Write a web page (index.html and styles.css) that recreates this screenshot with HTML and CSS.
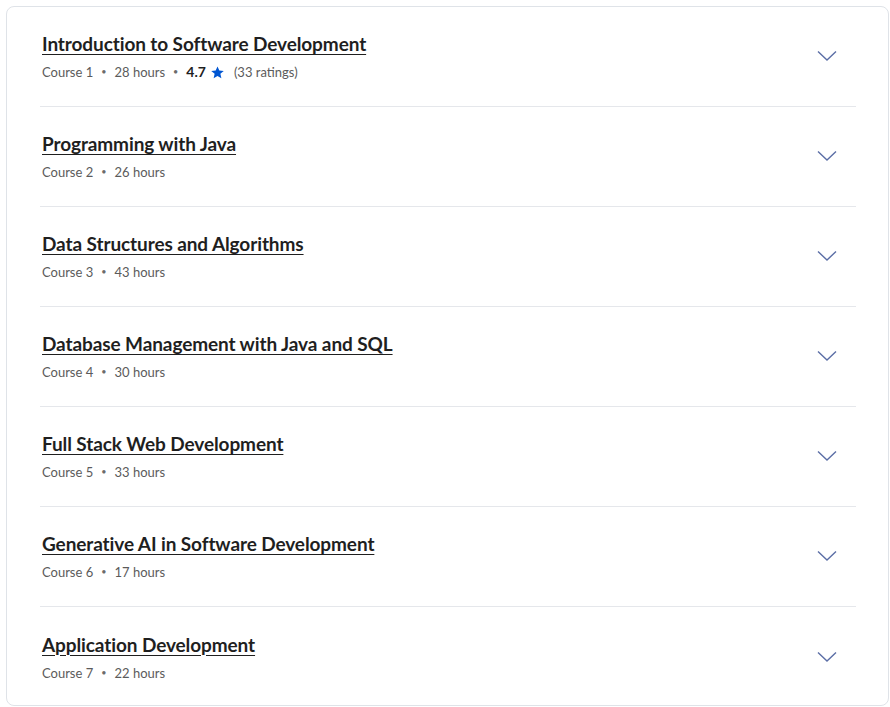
FILE: index.html
```html
<!DOCTYPE html>
<html lang="en">
<head>
<meta charset="utf-8">
<title>Courses</title>
<link rel="stylesheet" href="styles.css">
</head>
<body>
<div class="card">
  <ul class="courses">
    <li class="course">
      <div class="info">
        <a class="title" href="#">Introduction to Software Development</a>
        <div class="meta">
          <span>Course 1</span><span class="dot">•</span><span>28 hours</span><span class="dot">•</span>
          <span class="rating">4.7</span>
          <svg class="star" viewBox="0 0 24 24" width="15" height="15"><path d="M12 2.2l2.9 6.6 7.1.6-5.4 4.7 1.6 7-6.2-3.7-6.2 3.7 1.6-7L2 9.4l7.1-.6z" fill="#0056d2"/></svg>
          <span class="count">(33 ratings)</span>
        </div>
      </div>
      <button class="toggle" aria-label="Expand"><svg viewBox="0 0 20 12" width="20" height="12"><path d="M1 1.5l9 8.5 9-8.5" fill="none" stroke="#5b6ea6" stroke-width="1.4"/></svg></button>
    </li>
    <li class="course">
      <div class="info">
        <a class="title" href="#">Programming with Java</a>
        <div class="meta"><span>Course 2</span><span class="dot">•</span><span>26 hours</span></div>
      </div>
      <button class="toggle" aria-label="Expand"><svg viewBox="0 0 20 12" width="20" height="12"><path d="M1 1.5l9 8.5 9-8.5" fill="none" stroke="#5b6ea6" stroke-width="1.4"/></svg></button>
    </li>
    <li class="course">
      <div class="info">
        <a class="title" href="#">Data Structures and Algorithms</a>
        <div class="meta"><span>Course 3</span><span class="dot">•</span><span>43 hours</span></div>
      </div>
      <button class="toggle" aria-label="Expand"><svg viewBox="0 0 20 12" width="20" height="12"><path d="M1 1.5l9 8.5 9-8.5" fill="none" stroke="#5b6ea6" stroke-width="1.4"/></svg></button>
    </li>
    <li class="course">
      <div class="info">
        <a class="title" href="#">Database Management with Java and SQL</a>
        <div class="meta"><span>Course 4</span><span class="dot">•</span><span>30 hours</span></div>
      </div>
      <button class="toggle" aria-label="Expand"><svg viewBox="0 0 20 12" width="20" height="12"><path d="M1 1.5l9 8.5 9-8.5" fill="none" stroke="#5b6ea6" stroke-width="1.4"/></svg></button>
    </li>
    <li class="course">
      <div class="info">
        <a class="title" href="#">Full Stack Web Development</a>
        <div class="meta"><span>Course 5</span><span class="dot">•</span><span>33 hours</span></div>
      </div>
      <button class="toggle" aria-label="Expand"><svg viewBox="0 0 20 12" width="20" height="12"><path d="M1 1.5l9 8.5 9-8.5" fill="none" stroke="#5b6ea6" stroke-width="1.4"/></svg></button>
    </li>
    <li class="course">
      <div class="info">
        <a class="title" href="#">Generative AI in Software Development</a>
        <div class="meta"><span>Course 6</span><span class="dot">•</span><span>17 hours</span></div>
      </div>
      <button class="toggle" aria-label="Expand"><svg viewBox="0 0 20 12" width="20" height="12"><path d="M1 1.5l9 8.5 9-8.5" fill="none" stroke="#5b6ea6" stroke-width="1.4"/></svg></button>
    </li>
    <li class="course">
      <div class="info">
        <a class="title" href="#">Application Development</a>
        <div class="meta"><span>Course 7</span><span class="dot">•</span><span>22 hours</span></div>
      </div>
      <button class="toggle" aria-label="Expand"><svg viewBox="0 0 20 12" width="20" height="12"><path d="M1 1.5l9 8.5 9-8.5" fill="none" stroke="#5b6ea6" stroke-width="1.4"/></svg></button>
    </li>
  </ul>
</div>
</body>
</html>
```
FILE: styles.css
```css
html, body {
  margin: 0;
  padding: 0;
  background: #ffffff;
}

body {
  padding: 6px 1px 0 6px;
  font-family: "Lato", "Noto Sans", sans-serif;
  color: #1f1f1f;
}

.card {
  border: 1px solid #dfe3e8;
  border-radius: 8px;
  height: 700px;
  box-sizing: border-box;
  padding: 0 32px 0 33px;
}

.courses {
  list-style: none;
  margin: 0;
  padding: 0;
}

/* one course per row, chevron on the right */
.course {
  display: flex;
  align-items: center;
  justify-content: space-between;
  height: 100px;
  box-sizing: border-box;
  padding: 25px 0 24px 2px;
  border-bottom: 1px solid #e5e7eb;
}

.course:last-child {
  border-bottom: none;
}

.info {
  display: flex;
  flex-direction: column;
  gap: 6px;
}

.title {
  font-size: 19px;
  line-height: 24px;
  font-weight: 700;
  color: #1f1f1f;
  text-decoration: underline;
  text-underline-offset: 3px;
  text-decoration-thickness: 1px;
  letter-spacing: -0.1px;
}

.meta {
  display: flex;
  align-items: center;
  font-size: 13px;
  line-height: 20px;
  color: #5b5b5b;
}

.dot {
  font-size: 9px;
  margin: 0 8px;
  color: #6b6b6b;
}

.rating {
  font-weight: 700;
  font-size: 14px;
  color: #1f1f1f;
  margin-right: 4px;
}

.star {
  margin-right: 9px;
}

.count {
  color: #5b5b5b;
}

.toggle {
  width: 48px;
  height: 40px;
  margin: 0 5px 2px 0;
  border: none;
  background: none;
  padding: 0;
  display: flex;
  align-items: center;
  justify-content: center;
}
```
